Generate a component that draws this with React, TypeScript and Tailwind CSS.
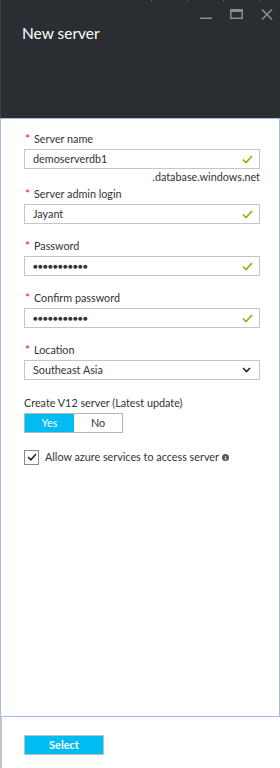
import { useState } from 'react';

const font = { fontFamily: 'Lato, "Open Sans", "Liberation Sans", sans-serif' };

function Check() {
  return (
    <svg width="11" height="9" viewBox="0 0 11 9" className="shrink-0">
      <path d="M1 4.5 L4 7.5 L10 1" fill="none" stroke="#7fba00" strokeWidth="1.6" />
    </svg>
  );
}

function Label({ text, first }: { text: string; first?: boolean }) {
  return (
    <div className={`flex items-center h-[16px] text-[10.8px] text-[#333] ${first ? '' : 'mt-[14px]'}`}>
      <span className="text-[#e81123] w-[10px] pl-[1px] text-[12px] leading-none">*</span>
      <span>{text}</span>
    </div>
  );
}

function Field({ value, secret }: { value: string; secret?: boolean }) {
  return (
    <div className="mt-[2px] h-[20px] border border-[#c6c6c6] flex items-center justify-between pl-[8px] pr-[6px]">
      <span className={secret ? 'text-[8px] tracking-[0.2px] text-[#333]' : 'text-[10.8px] text-[#333]'}>{value}</span>
      <Check />
    </div>
  );
}

export default function App() {
  const [v12, setV12] = useState(true);
  const [allow, setAllow] = useState(true);

  return (
    <div className="w-[280px] h-[768px] flex flex-col bg-white" style={font}>
      <div className="relative h-[118px] shrink-0 bg-[#2a2e33] border-l border-[#3c4046]">
        <div className="absolute top-0 left-[150px] w-px h-[2px] bg-[#55595f]" />
        <div className="absolute top-0 left-[186px] w-px h-[2px] bg-[#55595f]" />
        <div className="absolute top-0 left-[222px] w-px h-[2px] bg-[#55595f]" />
        <div className="absolute top-0 left-[259px] w-px h-[2px] bg-[#55595f]" />
        <div className="flex justify-end items-start gap-[18px] pt-[9px] pr-[7px]">
          <svg width="12" height="11" viewBox="0 0 12 11">
            <rect x="0" y="8.5" width="12" height="1.5" fill="#8a8d91" />
          </svg>
          <svg width="13" height="10" viewBox="0 0 13 10">
            <rect x="0.75" y="0.75" width="11.5" height="8.5" fill="none" stroke="#8a8d91" strokeWidth="1.5" />
            <rect x="0" y="0" width="13" height="3" fill="#8a8d91" />
          </svg>
          <svg width="12" height="11" viewBox="0 0 12 11">
            <path d="M1 0.5 L11 10.5 M11 0.5 L1 10.5" stroke="#8a8d91" strokeWidth="1.6" />
          </svg>
        </div>
        <div className="pl-[21px] pt-[6px] text-[15.5px] text-white leading-none">New server</div>
      </div>

      <div className="flex-1 border border-[#a4bde8] pl-[23px] pr-[19px] pt-[12px]">
        <Label text="Server name" first />
        <Field value="demoserverdb1" />
        <div className="mt-[1px] h-[14px] text-right text-[10.8px] text-[#333] leading-[14px]">.database.windows.net</div>
        <div className="mt-[2px]">
          <Label text="Server admin login" first />
        </div>
        <Field value="Jayant" />
        <Label text="Password" />
        <Field value="●●●●●●●●●●●" secret />
        <Label text="Confirm password" />
        <Field value="●●●●●●●●●●●" secret />
        <Label text="Location" />
        <div className="mt-[2px] h-[20px] border border-[#c6c6c6] flex items-center justify-between pl-[8px] pr-[8px]">
          <span className="text-[10.8px] text-[#333]">Southeast Asia</span>
          <svg width="9" height="6" viewBox="0 0 9 6">
            <path d="M1 1 L4.5 4.5 L8 1" fill="none" stroke="#222" strokeWidth="1.6" />
          </svg>
        </div>

        <div className="mt-[15px] h-[16px] flex items-center text-[10.8px] text-[#333]">Create V12 server (Latest update)</div>
        <div className="mt-[2px] flex w-[99px] h-[20px] border border-[#b5b5b5] text-[10.8px]">
          <button
            onClick={() => setV12(true)}
            className={`w-[49px] ${v12 ? 'bg-[#00bcf2] text-white' : 'bg-white text-[#333]'}`}
          >
            Yes
          </button>
          <button
            onClick={() => setV12(false)}
            className={`flex-1 ${!v12 ? 'bg-[#00bcf2] text-white' : 'bg-white text-[#333]'}`}
          >
            No
          </button>
        </div>

        <div className="mt-[16px] flex items-center gap-[6px] text-[10.8px] text-[#333]">
          <button
            onClick={() => setAllow(!allow)}
            className="w-[15px] h-[15px] border border-[#8a8a8a] bg-white flex items-center justify-center"
          >
            {allow && (
              <svg width="10" height="8" viewBox="0 0 10 8">
                <path d="M1 4 L3.8 6.8 L9 1" fill="none" stroke="#222" strokeWidth="1.5" />
              </svg>
            )}
          </button>
          <span>Allow azure services to access server</span>
          <span className="w-[7px] h-[7px] rounded-full bg-[#555] text-white text-[6px] leading-[7px] text-center font-bold -ml-[3px]">i</span>
        </div>
      </div>

      <div className="h-[51px] shrink-0 border-l-2 border-[#c4c4c4] pl-[22px] pt-[18px] flex items-start">
        <button className="block w-[80px] h-[20px] bg-[#00bcf2] border border-[#bdbdbd] text-white text-[11px] font-bold">
          Select
        </button>
      </div>
    </div>
  );
}
